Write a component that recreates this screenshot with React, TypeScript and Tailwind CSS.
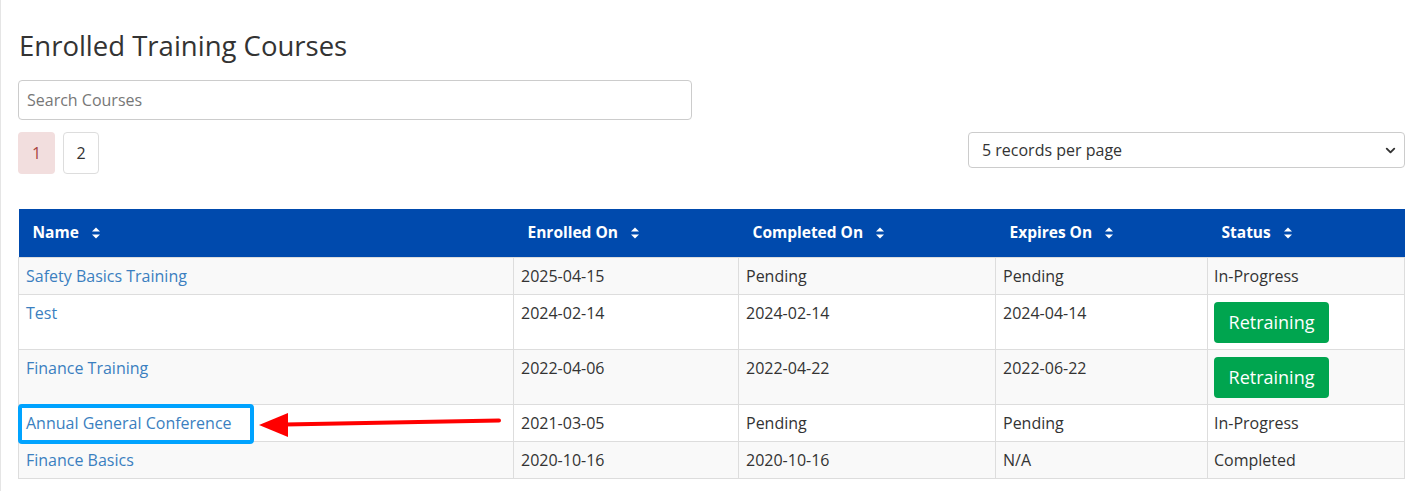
import React from 'react'
import { ChevronDown } from 'lucide-react'

const font = { fontFamily: '"Open Sans", "Liberation Sans", sans-serif' }

type Row = {
  name: string
  enrolled: string
  completed: string
  expires: string
  status: string
}

const rows: Row[] = [
  { name: 'Safety Basics Training', enrolled: '2025-04-15', completed: 'Pending', expires: 'Pending', status: 'In-Progress' },
  { name: 'Test', enrolled: '2024-02-14', completed: '2024-02-14', expires: '2024-04-14', status: 'Retraining' },
  { name: 'Finance Training', enrolled: '2022-04-06', completed: '2022-04-22', expires: '2022-06-22', status: 'Retraining' },
  { name: 'Annual General Conference', enrolled: '2021-03-05', completed: 'Pending', expires: 'Pending', status: 'In-Progress' },
  { name: 'Finance Basics', enrolled: '2020-10-16', completed: '2020-10-16', expires: 'N/A', status: 'Completed' },
]

function SortIcon() {
  return (
    <svg width="10" height="14" viewBox="0 0 10 14" className="inline-block ml-[12px] -mt-[2px]">
      <path d="M1 5.5 L5 1.5 L9 5.5 Z" fill="white" />
      <path d="M1 8.5 L5 12.5 L9 8.5 Z" fill="white" />
    </svg>
  )
}

const columns = [
  { label: 'Name', width: 'w-[495px]' },
  { label: 'Enrolled On', width: 'w-[225px]' },
  { label: 'Completed On', width: 'w-[257px]' },
  { label: 'Expires On', width: 'w-[212px]' },
  { label: 'Status', width: 'w-[197px]' },
]

export default function App() {
  return (
    <div style={font} className="relative w-[1418px] h-[491px] bg-white text-[#333] border-l border-[#e5e5e5] overflow-hidden">
      <div className="pl-[17px] pt-[28px] w-[1404px]">
        <h2 className="text-[27.5px] leading-[36px] font-normal text-[#333] ml-[1px]">Enrolled Training Courses</h2>

        <input
          type="text"
          placeholder="Search Courses"
          className="mt-[16px] w-[674px] h-[40px] border border-[#ccc] rounded-[4px] px-[8px] text-[16px] placeholder:text-[#777] outline-none"
        />

        <div className="mt-[12px] flex items-start justify-between">
          <div className="flex gap-[8px]">
            <button className="w-[37px] h-[42px] rounded-[4px] bg-[#f2dede] text-[#a94442] text-[16px]">1</button>
            <button className="w-[36px] h-[42px] rounded-[4px] border border-[#ddd] bg-white text-[#333] text-[16px]">2</button>
          </div>
          <div className="relative w-[437px] h-[36px]">
            <select className="appearance-none w-full h-full border border-[#ccc] rounded-[4px] pl-[13px] pr-[30px] text-[16px] text-[#333] bg-white outline-none">
              <option>5 records per page</option>
            </select>
            <ChevronDown size={15} strokeWidth={3} className="absolute right-[7px] top-[11px] text-[#333] pointer-events-none" />
          </div>
        </div>

        <table className="mt-[35px] w-[1387px] border-collapse table-fixed text-[16px]">
          <thead>
            <tr className="bg-[#004aad] h-[48px]">
              {columns.map((c) => (
                <th key={c.label} className={`${c.width} text-left text-white font-bold text-[15.5px] px-[14px] py-0`}>
                  {c.label}
                  <SortIcon />
                </th>
              ))}
            </tr>
          </thead>
          <tbody>
            {rows.map((r, i) => (
              <tr key={r.name} className={i % 2 === 0 ? 'bg-[#f9f9f9]' : 'bg-white'}>
                <td className="border border-[#ddd] align-top px-[7px] py-[7px] leading-[22px]">
                  <a href="#" className="text-[#3b7fc0]">{r.name}</a>
                </td>
                <td className="border border-[#ddd] align-top px-[7px] py-[7px] leading-[22px]">{r.enrolled}</td>
                <td className="border border-[#ddd] align-top px-[7px] py-[7px] leading-[22px]">{r.completed}</td>
                <td className="border border-[#ddd] align-top px-[7px] py-[7px] leading-[22px]">{r.expires}</td>
                <td className="border border-[#ddd] align-top px-[6px] py-[7px] leading-[22px]">
                  {r.status === 'Retraining' ? (
                    <button className="w-[115px] h-[41px] -mb-[1px] rounded-[4px] bg-[#00a54f] text-white text-[18px] align-top">Retraining</button>
                  ) : (
                    r.status
                  )}
                </td>
              </tr>
            ))}
          </tbody>
        </table>
      </div>

      <div className="absolute left-[17px] top-[404px] w-[236px] h-[40px] border-[4px] border-[#00a3ff] rounded-[4px] pointer-events-none" />
      <svg className="absolute left-0 top-0 pointer-events-none" width="1418" height="491">
        <line x1="284" y1="424.5" x2="498" y2="420.5" stroke="#ff0000" strokeWidth="4" strokeLinecap="round" />
        <path d="M258 425 L287 413 L287 437 Z" fill="#ff0000" />
      </svg>
    </div>
  )
}
